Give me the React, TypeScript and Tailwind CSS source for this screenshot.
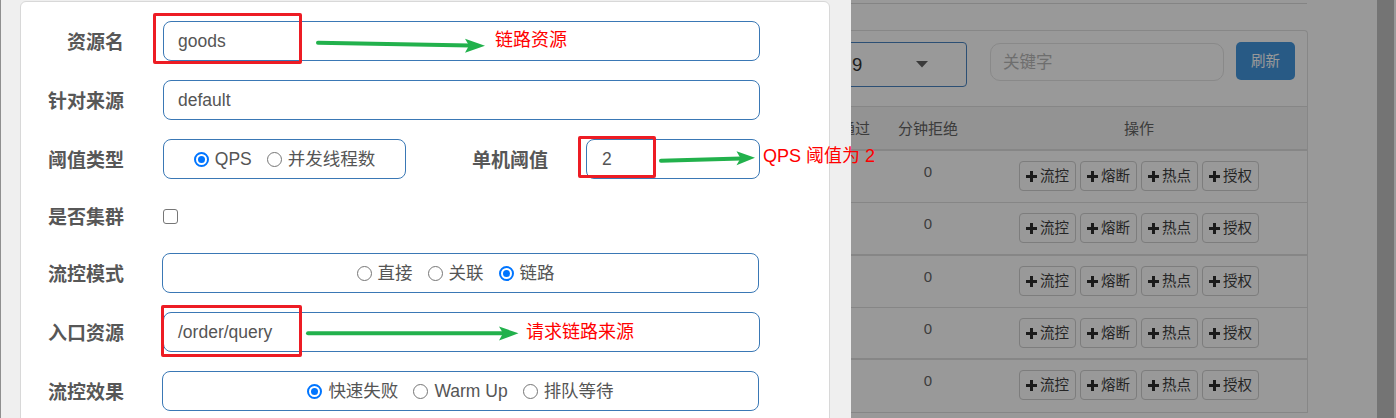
import React from "react";

const FONT = "font-[family-name:'Liberation_Sans','Noto_Sans_CJK_SC',sans-serif]";

function Radio({ checked }: { checked?: boolean }) {
  if (checked) {
    return (
      <span className="w-[15px] h-[15px] rounded-full border-2 border-[#0075ff] bg-white flex items-center justify-center shrink-0">
        <span className="w-[7px] h-[7px] rounded-full bg-[#0075ff]" />
      </span>
    );
  }
  return <span className="w-[15px] h-[15px] rounded-full border border-[#767676] bg-white shrink-0" />;
}

function RadioGroup({ items, extra = "" }: { items: { label: string; checked?: boolean }[]; extra?: string }) {
  return (
    <div className={`flex items-center justify-center gap-[15px] ${extra}`}>
      {items.map((it) => (
        <div key={it.label} className="flex items-center gap-[6px]">
          <Radio checked={it.checked} />
          <span className="text-[17.5px] leading-[24px] text-[#555]">{it.label}</span>
        </div>
      ))}
    </div>
  );
}

function Label({ children, w = "w-[103px]" }: { children: React.ReactNode; w?: string }) {
  return (
    <div className={`${w} text-right text-[19px] leading-[26px] font-bold text-[#575757] pt-[4px] shrink-0`}>
      {children}
    </div>
  );
}

const inputBox = "h-[40px] border border-[#3a78b5] rounded-[8px] bg-white flex items-center";

function PlusIcon() {
  return (
    <svg width="11" height="11" viewBox="0 0 11 11" className="shrink-0">
      <rect x="4" y="0" width="3" height="11" fill="#2e2e2e" />
      <rect x="0" y="4" width="11" height="3" fill="#2e2e2e" />
    </svg>
  );
}

function OpButton({ label }: { label: string }) {
  return (
    <div className="w-[57px] h-[30px] border border-[#d0d0d0] rounded-[4px] bg-white flex items-center pl-[6px] gap-[3px]">
      <PlusIcon />
      <span className="text-[14.5px] leading-[20px] text-[#3e3e3e]">{label}</span>
    </div>
  );
}

const rowStyles = [
  "h-[52px] border-b border-[#e0e0e0]",
  "h-[53px] border-b-2 border-[#e0e0e0]",
  "h-[52px] border-b border-[#e0e0e0]",
  "h-[52px] border-b-2 border-[#e0e0e0]",
  "h-[53px] border-b border-[#e0e0e0]",
];

export default function App() {
  return (
    <div className={`relative w-[1396px] h-[418px] overflow-hidden flex bg-[#efefef] ${FONT}`}>
      <div className="w-[20px] h-full bg-[#efefef] border-l border-[#8f8f8f] shrink-0" />

      <div className="w-[810px] shrink-0 pt-[1px]">
        <div className="h-[430px] bg-white border border-[#d8d8d8] rounded-t-[6px] pt-[19px]">
          <div className="flex items-center h-[40px] mb-[19px]">
            <Label>资源名</Label>
            <div className={`ml-[39px] w-[597px] ${inputBox} pl-[14px]`}>
              <span className="text-[17.5px] leading-[24px] text-[#555]">goods</span>
            </div>
          </div>
          <div className="flex items-center h-[40px] mb-[19px]">
            <Label>针对来源</Label>
            <div className={`ml-[39px] w-[597px] ${inputBox} pl-[14px]`}>
              <span className="text-[17.5px] leading-[24px] text-[#555]">default</span>
            </div>
          </div>
          <div className="flex items-center h-[40px] mb-[19px]">
            <Label>阈值类型</Label>
            <div className={`ml-[39px] w-[243px] ${inputBox} justify-center`}>
              <RadioGroup items={[{ label: "QPS", checked: true }, { label: "并发线程数" }]} />
            </div>
            <Label w="w-[142px]">单机阈值</Label>
            <div className={`ml-[38px] w-[174px] ${inputBox} pl-[15px]`}>
              <span className="text-[17.5px] leading-[24px] text-[#555]">2</span>
            </div>
          </div>
          <div className="flex items-center h-[36px] mb-[19px]">
            <Label>是否集群</Label>
            <span className="ml-[39px] w-[15px] h-[15px] rounded-[3px] border border-[#767676] bg-white" />
          </div>
          <div className="flex items-center h-[40px] mb-[19px]">
            <Label>流控模式</Label>
            <div className={`ml-[38px] w-[597px] ${inputBox} justify-center pr-[10px]`}>
              <RadioGroup items={[{ label: "直接" }, { label: "关联" }, { label: "链路", checked: true }]} />
            </div>
          </div>
          <div className="flex items-center h-[40px] mb-[19px]">
            <Label>入口资源</Label>
            <div className={`ml-[39px] w-[597px] ${inputBox} pl-[14px]`}>
              <span className="text-[17.5px] leading-[24px] text-[#555]">/order/query</span>
            </div>
          </div>
          <div className="flex items-center h-[40px]">
            <Label>流控效果</Label>
            <div className={`ml-[38px] w-[597px] ${inputBox} justify-center`}>
              <RadioGroup items={[{ label: "快速失败", checked: true }, { label: "Warm Up" }, { label: "排队等待" }]} />
            </div>
          </div>
        </div>
      </div>

      <div className="w-[21px] h-full bg-[#efefef] shrink-0" />

      {/* background page, covered by a modal backdrop */}
      <div className="relative w-[545px] h-full flex shrink-0 bg-white">
        <div className="w-[526px] h-full bg-white overflow-hidden shrink-0">
          <div className="mt-[3px] h-[1px] w-[456px] bg-[#dcdcdc]" />
          <div className="mt-[26px] w-[457px] border-t border-r border-[#e2e2e2] rounded-tr-[4px]">
            <div className="h-[75px] flex items-start">
              <div className="ml-[-20px] mt-[11px] w-[136px] h-[45px] border border-[#4a84c2] rounded-r-[4px] flex items-center pl-[20px] relative shrink-0">
                <span className="text-[18.5px] leading-[24px] text-[#333]">9</span>
                <svg width="12" height="7" viewBox="0 0 12 7" className="absolute left-[84px] top-[18px]">
                  <polygon points="0,0 12,0 6,6.5" fill="#616161" />
                </svg>
              </div>
              <div className="ml-[23px] mt-[12px] w-[234px] h-[38px] border border-[#e4e4e4] rounded-[10px] flex items-center pl-[12px] shrink-0">
                <span className="text-[16.5px] leading-[22px] text-[#b8b8b8]">关键字</span>
              </div>
              <div className="ml-[12px] mt-[11px] w-[59px] h-[38px] rounded-[5px] bg-[#4396de] flex items-center justify-center shrink-0">
                <span className="text-[14.5px] leading-[20px] text-white">刷新</span>
              </div>
            </div>
            <div className="h-[45px] border-t border-b-2 border-[#e0e0e0] bg-[#f5f5f5] flex items-center pt-[1px]">
              <div className="ml-[-16px] w-[40px] text-center text-[15px] leading-[20px] text-[#646464] shrink-0">通过</div>
              <div className="w-[106px] text-center text-[15px] leading-[20px] text-[#646464] shrink-0">分钟拒绝</div>
              <div className="w-[316px] text-center text-[15px] leading-[20px] text-[#646464] shrink-0">操作</div>
            </div>
            {rowStyles.map((cls, i) => (
              <div key={i} className={`${cls} flex items-start`}>
                <div className="ml-[-16px] w-[40px] shrink-0" />
                <div className="w-[106px] text-center text-[15px] leading-[20px] text-[#686868] pt-[11px] shrink-0">0</div>
                <div className="w-[316px] flex justify-center gap-[4px] pt-[10px] shrink-0">
                  <OpButton label="流控" />
                  <OpButton label="熔断" />
                  <OpButton label="热点" />
                  <OpButton label="授权" />
                </div>
              </div>
            ))}
          </div>
        </div>
        <div className="w-[17px] h-full bg-[#c1c1c1] shrink-0" />
        <div className="w-[2px] h-full bg-white shrink-0" />
        {/* backdrop */}
        <div className="absolute inset-0 bg-[rgba(0,0,0,0.4)]" />
      </div>

      {/* annotations overlay */}
      <div className="absolute inset-0 pointer-events-none">
        <div className="absolute left-[153px] top-[13px] w-[149px] h-[51px] border-[3px] border-[#ed1c24] rounded-[2px]" />
        <div className="absolute left-[578px] top-[136px] w-[78px] h-[42px] border-[3px] border-[#ed1c24] rounded-[2px]" />
        <div className="absolute left-[161px] top-[305px] w-[141px] h-[52px] border-[3px] border-[#ed1c24] rounded-[2px]" />

        <svg width="1396" height="418" className="absolute left-0 top-0">
          <line x1="318" y1="42.7" x2="470" y2="45.4" stroke="#22b14c" strokeWidth="4" strokeLinecap="round" />
          <polygon points="465,38.7 485,45.7 465,52.7 469,45.6" fill="#22b14c" />
          <line x1="661" y1="160.7" x2="741" y2="158.4" stroke="#22b14c" strokeWidth="4" strokeLinecap="round" />
          <polygon points="736.5,151.2 755,157.7 736.5,165.2 740.5,158.3" fill="#22b14c" />
          <line x1="308" y1="333.3" x2="504" y2="333.3" stroke="#22b14c" strokeWidth="4" strokeLinecap="round" />
          <polygon points="499,326.5 518.5,333.3 499,340.5 503,333.3" fill="#22b14c" />
        </svg>

        <div className="absolute left-[495px] top-[28px] text-[18px] leading-[24px] text-[#ff0000] whitespace-nowrap">链路资源</div>
        <div className="absolute left-[763px] top-[144px] text-[18px] leading-[24px] text-[#ff0000] whitespace-nowrap">QPS 阈值为 2</div>
        <div className="absolute left-[526px] top-[320px] text-[18px] leading-[24px] text-[#ff0000] whitespace-nowrap">请求链路来源</div>
      </div>
    </div>
  );
}
